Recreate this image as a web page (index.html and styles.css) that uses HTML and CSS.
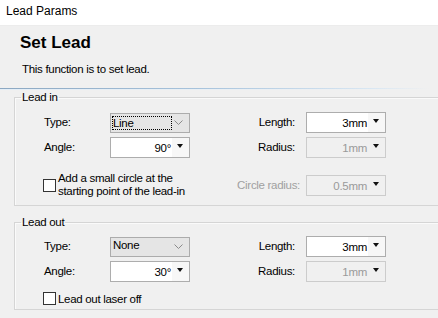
FILE: index.html
```html
<!DOCTYPE html>
<html lang="en">
<head>
  <meta charset="UTF-8" />
  <title>Lead Params</title>
  <link rel="stylesheet" href="styles.css">
</head>
<body>
  <div class="dialog">
    <div class="titlebar">Lead Params</div>
    <div class="content">
      <div class="header">
        <h1>Set Lead</h1>
        <p>This function is to set lead.</p>
      </div>
      <div class="divider"></div>

      <fieldset class="group group-in">
        <legend>Lead in</legend>
        <div class="grid">
          <span class="lbl">Type:</span>
          <div class="combo">
            <span class="focus">Line</span>
            <svg class="chev" width="9" height="5" viewBox="0 0 9 5"><path d="M0.5 0.5 L4.5 4.5 L8.5 0.5" fill="none" stroke="#8a8a8a" stroke-width="1"/></svg>
          </div>
          <span class="lbl-r">Length:</span>
          <div class="spin"><span class="val">3mm</span><span class="arrow"></span></div>

          <span class="lbl">Angle:</span>
          <div class="spin"><span class="val">90°</span><span class="arrow"></span></div>
          <span class="lbl-r">Radius:</span>
          <div class="spin disabled"><span class="val">1mm</span><span class="arrow"></span></div>

          <label class="check wrap">
            <span class="box"></span>
            <span>Add a small circle at the<br>starting point of the lead-in</span>
          </label>
          <span class="lbl-r lbl-off">Circle radius:</span>
          <div class="spin disabled"><span class="val">0.5mm</span><span class="arrow"></span></div>
        </div>
      </fieldset>

      <fieldset class="group group-out">
        <legend>Lead out</legend>
        <div class="grid">
          <span class="lbl">Type:</span>
          <div class="combo">
            <span class="plain">None</span>
            <svg class="chev" width="9" height="5" viewBox="0 0 9 5"><path d="M0.5 0.5 L4.5 4.5 L8.5 0.5" fill="none" stroke="#8a8a8a" stroke-width="1"/></svg>
          </div>
          <span class="lbl-r">Length:</span>
          <div class="spin"><span class="val">3mm</span><span class="arrow"></span></div>

          <span class="lbl">Angle:</span>
          <div class="spin"><span class="val">30°</span><span class="arrow"></span></div>
          <span class="lbl-r">Radius:</span>
          <div class="spin disabled"><span class="val">1mm</span><span class="arrow"></span></div>

          <label class="check single">
            <span class="box"></span>
            <span>Lead out laser off</span>
          </label>
        </div>
      </fieldset>
    </div>
  </div>
</body>
</html>
```

FILE: styles.css
```css
* {
  box-sizing: border-box;
}

html, body {
  margin: 0;
  padding: 0;
  overflow: hidden;
}

body {
  width: 438px;
  height: 318px;
  background: #f0f0f0;
  font-family: 'Liberation Sans', Arial, sans-serif;
  font-size: 11.5px;
  letter-spacing: -0.3px;
  color: #000;
}

.titlebar {
  height: 26px;
  background: #fff;
  padding: 3px 0 0 6px;
  line-height: 16px;
  font-size: 12px;
  letter-spacing: 0;
  border-bottom: 1px solid #ececec;
}

.content {
  background: #f0f0f0;
}

.header {
  padding: 6px 0 0 20px;
  height: 62px;
}

.header h1 {
  margin: 0;
  font-size: 17px;
  line-height: 22px;
  font-weight: bold;
  letter-spacing: 0;
}

.header p {
  margin: 8px 0 0 2px;
  line-height: 14px;
}

.divider {
  height: 2px;
  background:
    linear-gradient(to right, #8ca8c2 0%, #a7c3dc 45%, #d9e7f3 85%, rgba(240, 240, 240, 0) 98%) top / 100% 1px no-repeat,
    linear-gradient(to right, #e4eef7, #f0f0f0) bottom / 100% 1px no-repeat;
}

.group {
  margin: 0 -20px 0 14px;
  padding: 0;
  border: 1px solid #d5d5d5;
  box-shadow: inset 1px 1px 0 #fafafa;
  min-width: 0;
}

.group legend {
  margin-left: 6px;
  padding: 0 1px;
  line-height: 13px;
}

.group-in {
  margin-top: 1px;
  height: 115px;
}

.group-out {
  margin-top: 10px;
  height: 94px;
}

.grid {
  display: grid;
  grid-template-columns: 66px 80px 116px 80px;
  grid-template-rows: 21px 21px 36px;
  row-gap: 4px;
  padding: 8px 0 0 29px;
  align-items: center;
}

.group-out .grid {
  grid-template-rows: 21px 21px 21px;
  padding-top: 7px;
}

.lbl {
  line-height: 21px;
}

.lbl-r {
  text-align: right;
  padding-right: 11px;
  line-height: 21px;
}

.lbl-off {
  color: #a0a0a0;
  padding-right: 6px;
  white-space: nowrap;
}

.combo {
  height: 20px;
  background: #e5e5e5;
  border: 1px solid #acacac;
  display: flex;
  align-items: center;
  justify-content: space-between;
  padding: 0 6px 0 1px;
}

.combo .focus {
  width: 60px;
  height: 14px;
  line-height: 12px;
  border: 1px dotted #000;
  padding-left: 0;
}

.combo .plain {
  padding-left: 1px;
  line-height: 14px;
  margin-top: -3px;
}

.spin {
  height: 21px;
  background: #fff;
  border: 1px solid #adadad;
  display: flex;
  align-items: center;
}

.spin .val {
  flex: 1;
  text-align: right;
  padding-right: 1px;
}

.spin .arrow {
  width: 17px;
  height: 100%;
  background: #f7f7f7;
  position: relative;
}

.spin .arrow::after {
  content: '';
  position: absolute;
  left: 5px;
  top: 6px;
  border-left: 3.5px solid transparent;
  border-right: 3.5px solid transparent;
  border-top: 4px solid #111;
}

.spin.disabled {
  background: #f0f0f0;
  border-color: #cccccc;
  color: #9a9a9a;
}

.spin.disabled .arrow {
  background: #f0f0f0;
}

.check {
  grid-column: 1 / 3;
  display: flex;
  align-items: center;
  margin-left: -1px;
  gap: 2px;
  white-space: nowrap;
}

.check .box {
  width: 13px;
  height: 13px;
  border: 1px solid #333;
  background: #fff;
  flex: none;
}

.check.wrap {
  line-height: 13px;
  align-self: end;
}

.check.single {
  margin-top: 4px;
}

.grid .check.wrap ~ .lbl-r,
.grid .check.wrap ~ .spin {
  align-self: end;
  margin-bottom: 2px;
}
```
